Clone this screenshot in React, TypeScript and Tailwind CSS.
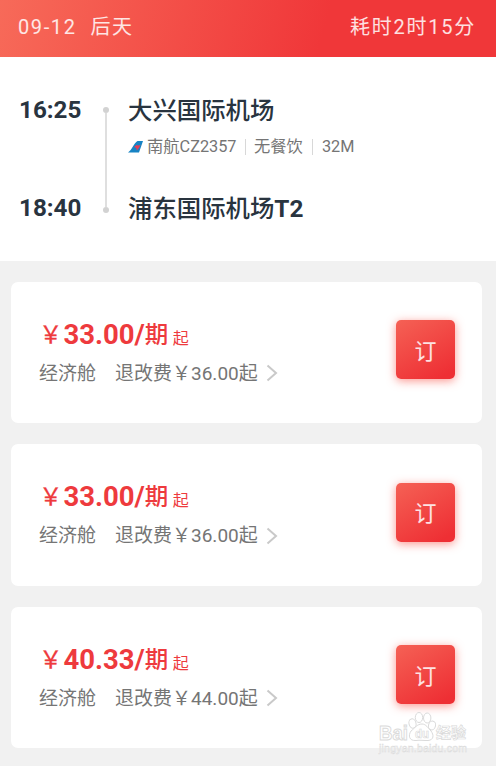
import React from "react";

const fares = [
  { price: "33.00", fee: "36.00" },
  { price: "33.00", fee: "36.00" },
  { price: "40.33", fee: "44.00" },
];

function FareCard({ price, fee }: { price: string; fee: string }) {
  return (
    <section className="flex h-[141.5px] items-start justify-between rounded-[7px] bg-white pl-[28px] pr-[27px]">
      <div className="pt-[34px]">
        <div className="flex h-[38px] items-center whitespace-nowrap leading-none text-[#ee3a3d]">
          <span className="w-[24.5px] text-[23.5px] leading-[38px] [-webkit-text-stroke:0.3px_#ee3a3d]">￥</span>
          <span className="text-[27.5px] font-bold leading-[38px]">{price}/</span>
          <span className="text-[23.5px] font-medium leading-[38px]">期</span>
          <span className="ml-[4.5px] pt-[7px] text-[16px] leading-[31px]">起</span>
        </div>
        <div className="flex h-[39px] items-center whitespace-nowrap text-[19px] leading-[39px] text-[#757575]">
          <span className="w-[76px]">经济舱</span>
          <span>退改费￥{fee}起</span>
          <svg className="ml-[8px]" width="12" height="18" viewBox="0 0 12 18" fill="none" stroke="#c9c9c9" strokeWidth="2">
            <path d="M1.500 1.500 10 9l-8.500 7.500" />
          </svg>
        </div>
      </div>
      <button className="mt-[38.5px] h-[59px] w-[59px] rounded-[5px] bg-[linear-gradient(150deg,#f56155,#ee2f34_90%)] pt-[4px] text-[22px] leading-none text-white/85 shadow-[0_2px_10px_rgba(250,80,70,0.6)]">
        订
      </button>
    </section>
  );
}

function Watermark() {
  return (
    <svg className="absolute left-[376px] top-[710px]" width="96" height="46" viewBox="0 0 96 46" fill="#fff" stroke="#dadada" strokeWidth="1">
      <text x="3" y="29.500" fontSize="21" fontWeight="bold" textLength="29" lengthAdjust="spacingAndGlyphs" className="font-['Liberation_Sans',sans-serif]">Bai</text>
      <ellipse cx="36.500" cy="13.500" rx="3.500" ry="4.700" transform="rotate(-15 36.5 13.5)" />
      <ellipse cx="43" cy="7.500" rx="3.700" ry="5" />
      <ellipse cx="51.200" cy="8" rx="3.700" ry="5" />
      <ellipse cx="56" cy="15.500" rx="3.500" ry="4.500" transform="rotate(15 56 15.5)" />
      <path d="M46 14c4 0 6 4 9 7 3 4 3 9-3 9.500-4 .2-8-.7-12 0-7 .5-8-5-5-9.500 4-3 6-7 11-7Z" />
      <text x="39" y="28" fontSize="13" fontWeight="bold" textLength="14" lengthAdjust="spacingAndGlyphs" strokeWidth="0.7" className="font-['Liberation_Sans',sans-serif]">du</text>
      <text x="60" y="27.500" fontSize="15" fontWeight="bold" textLength="30" strokeWidth="0.7" className="font-['Noto_Sans_CJK_SC',sans-serif]">经验</text>
      <text x="3" y="42" fontSize="10.500" textLength="88" strokeWidth="0.5" className="font-['Liberation_Sans',sans-serif]">jingyan.baidu.com</text>
    </svg>
  );
}

export default function App() {
  return (
    <main className="relative h-[766px] w-[496px] overflow-hidden bg-[#f1f1f1] font-[Roboto,'Noto_Sans_CJK_SC',sans-serif]">
      <header className="flex h-[56.5px] items-center justify-between bg-[linear-gradient(105deg,#f76a59_0%,#f03739_65%,#f03739_100%)] pl-[18px] pr-[20px] text-[20px] leading-none text-white/85">
        <div className="flex gap-[14px] pb-[3px]">
          <span className="tracking-[1.6px]">09-12</span>
          <span className="tracking-[1.6px]">后天</span>
        </div>
        <span className="pb-[3px] tracking-[1.75px]">耗时2时15分</span>
      </header>

      <section className="flex h-[204px] bg-white pl-[19px] pt-[35px] text-[#29343f]">
        <div className="flex w-[83px] flex-col text-[24.2px] font-bold leading-[36px]">
          <span>16:25</span>
          <span className="mt-[62px]">18:40</span>
        </div>
        <div className="mt-[15px] flex h-[106px] w-[7px] flex-col items-center">
          <i className="h-[6px] w-[6px] rounded-full bg-[#d2d2d2]" />
          <i className="w-[2px] flex-1 bg-[#dfdfdf]" />
          <i className="h-[6px] w-[6px] rounded-full bg-[#d2d2d2]" />
        </div>
        <div className="ml-[19px] flex flex-col pt-px text-[24.4px] font-medium leading-[36px]">
          <span>大兴国际机场</span>
          <div className="flex h-[36px] items-center text-[16.3px] font-normal text-[#757575]">
            <svg className="mr-[4px]" width="15" height="12" viewBox="0 0 15 12">
              <path d="M0 11.500C4 9 6 2 9.500 0H15l-4 11.500Z" fill="#1683c4" />
              <path d="M6 6 8.500 4l1.500.500L12.500 4l-1.500 3L8.800 9.500 8.300 7Z" fill="#e43e58" />
            </svg>
            <span>南航CZ2357</span>
            <i className="ml-[8.5px] mr-[8px] h-[16px] w-px bg-[#d8d8d8]" />
            <span>无餐饮</span>
            <i className="mx-[9px] h-[16px] w-px bg-[#d8d8d8]" />
            <span>32M</span>
          </div>
          <span className="mt-[26px]">浦东国际机场<b>T2</b></span>
        </div>
      </section>

      <div className="flex flex-col gap-[21px] pl-[11px] pr-[14px] pt-[21px]">
        {fares.map((fare, index) => <FareCard key={index} {...fare} />)}
      </div>
      <Watermark />
    </main>
  );
}
